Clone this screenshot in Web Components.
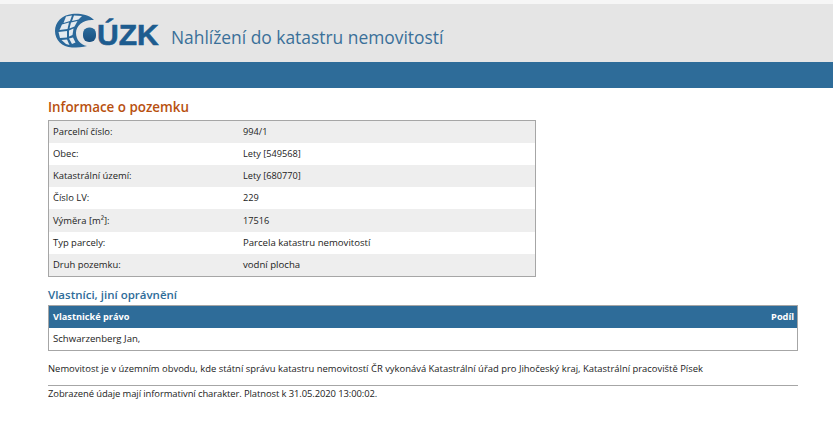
<!DOCTYPE html>
<html lang="cs">
<head>
<meta charset="utf-8">
<title>Nahlížení do katastru nemovitostí</title>
<style>
  html, body { margin: 0; background: #fff; }
  body { font: 9.43px "Open Sans", "Noto Sans", sans-serif; color: #222; }
</style>
</head>
<body>
<cuzk-header>Nahlížení do katastru nemovitostí</cuzk-header>
<page-content>
  <section-title color="#b8500f" size="13.4">Informace o pozemku</section-title>
  <info-table>
    <info-row label="Parcelní číslo:" num>994/1</info-row>
    <info-row label="Obec:" num>Lety [549568]</info-row>
    <info-row label="Katastrální území:" num>Lety [680770]</info-row>
    <info-row label="Číslo LV:" num>229</info-row>
    <info-row label="Výměra [m²]:" num tall>17516</info-row>
    <info-row label="Typ parcely:">Parcela katastru nemovitostí</info-row>
    <info-row label="Druh pozemku:">vodní plocha</info-row>
  </info-table>
  <section-title color="#2e6c99" size="11.5" class="owners">Vlastníci, jiní oprávnění</section-title>
  <owner-table left="Vlastnické právo" right="Podíl">Schwarzenberg Jan,</owner-table>
  <page-note>Nemovitost je v územním obvodu, kde státní správu katastru nemovitostí ČR vykonává Katastrální úřad pro Jihočeský kraj, Katastrální pracoviště Písek</page-note>
  <page-footer>Zobrazené údaje mají informativní charakter. Platnost k 31.05.2020 13:00:02.</page-footer>
</page-content>

<script>
class CuzkHeader extends HTMLElement {
    constructor() {
        super();
        this.attachShadow({ mode: 'open' });
        this.shadowRoot.innerHTML = `
        <style>
            :host { display: block; padding-top: 4px; background: #f6f6f6; }
            .top {
                height: 58px;
                background: #e5e5e5;
                display: flex;
                align-items: center;
                padding-left: 55px;
            }
            .logo { display: flex; align-self: flex-start; width: 116px; height: 36px; margin-top: 9px; }
            svg { display: block; flex: none; }
            .mark {
                font: bold 30px/34px "Liberation Sans", sans-serif;
                color: #1d5c8f;
                -webkit-text-stroke: 0.6px #1d5c8f;
                margin-left: 0;
                margin-top: 5px;
            }
            .name { font-size: 17.4px; color: #3a7099; margin-top: 8px; }
            .bar { height: 26px; background: #2e6c99; }
        </style>
        <div class="top">
            <div class="logo">
                <svg width="42" height="36" viewBox="0 0 42 36">
                    <defs>
                        <clipPath id="globe">
                            <path d="M39 7 C33 1 24 0.5 17 1 C7 2 0 9 0 18 C0 27 7 34 17 34.5 C22 34.5 28 34.5 32 33 C26 32 21 27 21 20 C21 12 29 6 39 7Z"/>
                        </clipPath>
                        <linearGradient id="ball" x1="0" y1="0" x2="0" y2="1">
                            <stop offset="0" stop-color="#2a6b9c"/>
                            <stop offset="1" stop-color="#1a4f7e"/>
                        </linearGradient>
                    </defs>
                    <path d="M39 7 C33 1 24 0.5 17 1 C7 2 0 9 0 18 C0 27 7 34 17 34.5 C22 34.5 28 34.5 32 33 C26 32 21 27 21 20 C21 12 29 6 39 7Z" fill="#2a689a"/>
                    <g clip-path="url(#globe)" fill="#e3eaf0">
                        <path d="M11 3.5 L17 2.5 L15 8 L8.5 10Z"/>
                        <path d="M19 2.5 L27 3 L23.5 6.5 L17 8Z"/>
                        <path d="M7 11.5 L14 9.5 L12.5 16 L4.5 17Z"/>
                        <path d="M16 9.5 L22.5 8 L19.5 13.5 L14.5 15.5Z"/>
                        <path d="M3.5 19 L12 18 L12 24.5 L5 25Z"/>
                        <path d="M14 17.5 L18.5 15.5 L17.5 22 L14 23.5Z"/>
                        <path d="M6.5 27 L12 26.5 L14.5 32 L11 31Z"/>
                        <path d="M14 25.5 L18 24.5 L20.5 29.5 L17 31Z"/>
                    </g>
                    <rect x="28" y="14.5" width="13" height="14.5" rx="6" fill="url(#ball)"/>
                </svg>
                <span class="mark">ÚZK</span>
            </div>
            <span class="name"><slot></slot></span>
        </div>
        <div class="bar"></div>
        `;
    }
}

class PageContent extends HTMLElement {
    constructor() {
        super();
        this.attachShadow({ mode: 'open' });
        this.shadowRoot.innerHTML = `
        <style>
            :host { display: block; padding: 11px 35px 0 48px; }
        </style>
        <slot></slot>
        `;
    }
}

class SectionTitle extends HTMLElement {
    constructor() {
        super();
        this.attachShadow({ mode: 'open' });
        this.shadowRoot.innerHTML = `
        <style>
            :host { display: block; font-weight: 600; line-height: 17px; margin-bottom: 4px; }
            :host(.owners) { margin-top: 9px; margin-bottom: 2px; }
        </style>
        <slot></slot>
        `;
    }

    connectedCallback() {
        this.style.color = this.getAttribute('color');
        this.style.fontSize = this.getAttribute('size') + 'px';
    }
}

class InfoTable extends HTMLElement {
    constructor() {
        super();
        this.attachShadow({ mode: 'open' });
        this.shadowRoot.innerHTML = `
        <style>
            :host { display: block; width: 486px; border: 1px solid #a6a6a6; }
            ::slotted(info-row:nth-child(odd)) { background: #eeeeee; }
        </style>
        <slot></slot>
        `;
    }
}

class InfoRow extends HTMLElement {
    constructor() {
        super();
        this.attachShadow({ mode: 'open' });
        this.shadowRoot.innerHTML = `
        <style>
            :host {
                display: grid;
                grid-template-columns: 190px 1fr;
                height: 22px;
                line-height: 22px;
                padding-left: 4px;
            }
            :host([tall]) { height: 23px; line-height: 23px; }
            .value { font-size: 9.6px; }
            :host([num]) .value { font-size: 9.2px; }
        </style>
        <span class="label"></span>
        <span class="value"><slot></slot></span>
        `;
    }

    connectedCallback() {
        this.shadowRoot.querySelector('.label').textContent = this.getAttribute('label');
    }
}

class OwnerTable extends HTMLElement {
    constructor() {
        super();
        this.attachShadow({ mode: 'open' });
        this.shadowRoot.innerHTML = `
        <style>
            :host { display: block; border: 1px solid #a6a6a6; }
            .head {
                display: flex;
                justify-content: space-between;
                height: 22px;
                line-height: 22px;
                padding: 0 3px 0 4px;
                background: #2e6c99;
                color: #fff;
                font-weight: 700;
                font-size: 9.2px;
            }
            .body { height: 22px; line-height: 22px; padding: 0 4px; font-size: 9.6px; }
        </style>
        <div class="head"><span class="l"></span><span class="r"></span></div>
        <div class="body"><slot></slot></div>
        `;
    }

    connectedCallback() {
        this.shadowRoot.querySelector('.l').textContent = this.getAttribute('left');
        this.shadowRoot.querySelector('.r').textContent = this.getAttribute('right');
    }
}

class PageNote extends HTMLElement {
    constructor() {
        super();
        this.attachShadow({ mode: 'open' });
        this.shadowRoot.innerHTML = `
        <style>
            :host { display: block; margin-top: 10px; line-height: 16px; }
        </style>
        <slot></slot>
        `;
    }
}

class PageFooter extends HTMLElement {
    constructor() {
        super();
        this.attachShadow({ mode: 'open' });
        this.shadowRoot.innerHTML = `
        <style>
            :host { display: block; margin-top: 8px; border-top: 1px solid #a6a6a6; line-height: 15px; letter-spacing: -0.09px; }
        </style>
        <slot></slot>
        `;
    }
}

customElements.define('cuzk-header', CuzkHeader);
customElements.define('page-content', PageContent);
customElements.define('section-title', SectionTitle);
customElements.define('info-table', InfoTable);
customElements.define('info-row', InfoRow);
customElements.define('owner-table', OwnerTable);
customElements.define('page-note', PageNote);
customElements.define('page-footer', PageFooter);
</script>
</body>
</html>
